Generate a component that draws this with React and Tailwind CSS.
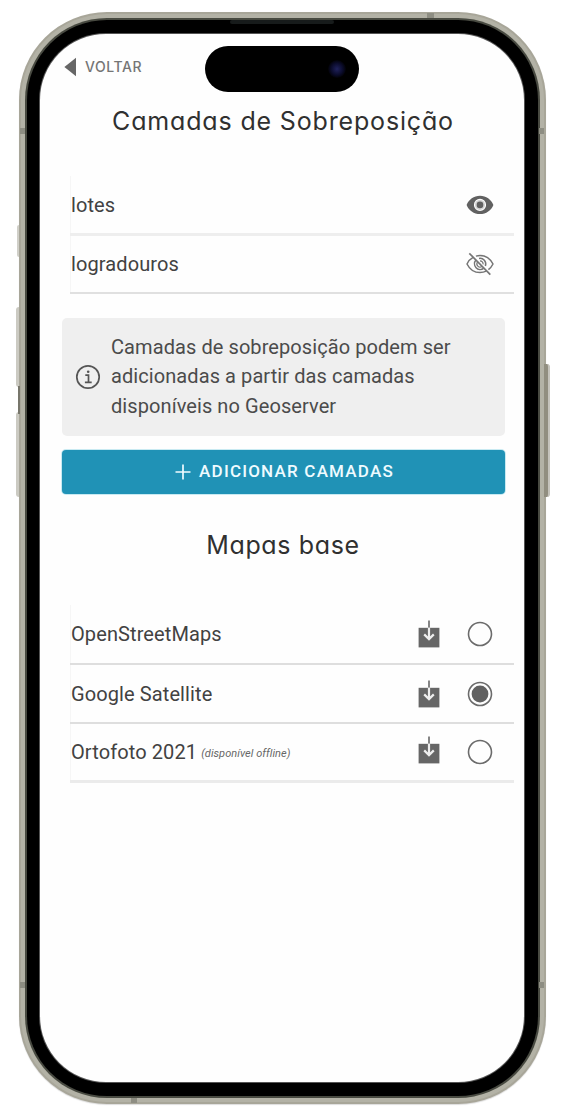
import React from 'react';

function EyeIcon() {
  return (
    <svg viewBox="0 0 28 20" className="h-5 w-7 shrink-0" fill="#616161">
      <path fillRule="evenodd" d="M14 .7C7.9.7 2.7 4.5.6 9.9c2.1 5.4 7.3 9.2 13.4 9.2s11.3-3.8 13.4-9.2C25.3 4.5 20.1.7 14 .7zm0 15.3a6.100 6.100 0 1 1 0-12.200 6.100 6.100 0 0 1 0 12.200z" />
      <circle cx="14" cy="9.9" r="5" fill="#d2d2d2" />
      <circle cx="14" cy="9.9" r="3.300" />
    </svg>
  );
}

function EyeOffIcon() {
  return (
    <svg viewBox="0 0 28 24" className="h-6 w-7 shrink-0" fill="none" stroke="#757575" strokeWidth="1.5">
      <path d="M7.4 5.2C4.7 6.7 2.5 8.800 1 12c2.800 5.600 7.500 8.600 13 8.600 2.300 0 4.400-.5 6.200-1.400M9.900 4.100C11.200 3.700 12.600 3.400 14 3.400c5.700 0 10.300 3.200 13 8.600-1.200 2.400-2.700 4.300-4.600 5.700" />
      <path d="M9.900 8.100a5.700 5.700 0 0 0 7.700 8.300M13 6.400a5.700 5.700 0 0 1 6.400 7.500" />
      <path d="M11.500 10a3.200 3.200 0 0 0 4.400 4.500M14 8.900a3.200 3.200 0 0 1 3.100 3.500" strokeWidth="1.2" />
      <path d="M3.300 1.300 24.300 22.700" strokeWidth="1.7" />
    </svg>
  );
}

function DownloadIcon() {
  return (
    <svg viewBox="0 0 22 28" className="h-7 w-[22px] shrink-0" fill="none">
      <path d="M.6 7.800h20.800v19.600H.6z" fill="#666" />
      <path d="M11 .5v7.300" stroke="#858585" strokeWidth="2" />
      <path d="M11 7.800v10.500M6.200 14.400 11 19.100l4.800-4.700" stroke="#eeeeee" strokeWidth="2.200" />
    </svg>
  );
}

function Radio({ checked }) {
  return (
    <svg viewBox="0 0 26 26" className="size-[26px] shrink-0" fill="none">
      <circle cx="13" cy="13" r="11.500" stroke="#6b6b6b" strokeWidth="1.6" />
      {checked && <circle cx="13" cy="13" r="8.400" fill="#616161" />}
    </svg>
  );
}

function InfoIcon() {
  return (
    <svg viewBox="0 0 26 26" className="size-[26px] shrink-0" fill="none" stroke="#555" strokeWidth="1.700">
      <circle cx="13" cy="13" r="11.200" />
      <path d="M10.300 11.200h3.200v7.100M9.900 18.400h6.800" />
      <circle cx="13.200" cy="7.700" r="1.300" fill="#555" stroke="none" />
    </svg>
  );
}

function Row({ label, note, line, children }) {
  return (
    <div className={`flex justify-between ${line}`}>
      <div className="flex items-center border-l border-l-[#f6f6f6] text-[20px] tracking-[0.1px] whitespace-nowrap text-[#424242]">
        <span>{label}</span>
        {note && <span className="mt-[5px] ml-1 text-[11px] tracking-[0.05px] text-[#666] italic">{note}</span>}
      </div>
      <div className="flex items-center">{children}</div>
    </div>
  );
}

function Heading({ children, className }) {
  return (
    <h2 className={`text-center font-['Inter'] text-[25px] leading-[36px] font-normal whitespace-nowrap text-[#303030] [font-feature-settings:'cv11'] ${className}`}>
      {children}
    </h2>
  );
}

function Screen() {
  return (
    <main className="h-[1048px] w-[484px] overflow-hidden rounded-[66px] bg-[#fefefe] shadow-[0_0_0_1px_#555]">
      <header className="flex h-[68px] items-start justify-between pl-6">
        <div className="mt-[21px] flex items-center gap-[9px] text-[#757575]">
          <svg viewBox="0 0 12 20" className="h-5 w-3" fill="#666"><path d="M12 .8v18.400L.4 10z" /></svg>
          <span className="font-['Inter'] text-[14px] leading-6 font-medium tracking-[0.6px]">VOLTAR</span>
        </div>
        <div className="mt-3 mr-[165px] flex h-[46px] w-[154px] items-center justify-end rounded-full bg-black pr-[13px]">
          <span className="size-[18px] rounded-full bg-[radial-gradient(circle,#20225c_0%,#0b0c2c_45%,#000_75%)]" />
        </div>
      </header>
      <Heading className="mt-px pl-[2px] tracking-[0.84px]">Camadas de Sobreposição</Heading>
      <div className="mt-[37px] ml-[30px] w-[444px]">
        <Row label="lotes" line="h-[60px] border-b-3 border-b-[#eeeeee] pr-5"><EyeIcon /></Row>
        <Row label="logradouros" line="h-[58px] border-b-2 border-b-[#e0e0e0] pr-5"><EyeOffIcon /></Row>
      </div>
      <section className="mt-[24px] ml-[22px] flex h-[118px] w-[443px] items-center gap-[10px] rounded-[5px] bg-[#efefef] pl-[13px]">
        <InfoIcon />
        <p className="text-[20px] leading-[29.600px] tracking-[0.080px] whitespace-nowrap text-[#4b4b4b]">
          Camadas de sobreposição podem ser<br />adicionadas a partir das camadas<br />disponíveis no Geoserver
        </p>
      </section>
      <button className="mt-[14px] ml-[22px] flex h-[44px] w-[443px] items-center justify-center gap-2 rounded-[4px] bg-[#2092b6] pl-[2px] text-[17px] font-medium tracking-[1.2px] whitespace-nowrap text-[#effbff] shadow-[0_0_0_1px_#c8eaf2]">
        <svg viewBox="0 0 16 16" className="size-4" stroke="currentColor" strokeWidth="1.700"><path d="M8 .5v15M.5 8h15" /></svg>
        <span>ADICIONAR CAMADAS</span>
      </button>
      <Heading className="mt-[33px] pl-[2px] tracking-[0.65px]">Mapas base</Heading>
      <div className="mt-[42px] ml-[30px] w-[444px]">
        <Row label="OpenStreetMaps" line="h-[60px] border-b-2 border-b-[#dedede] pr-[21px]">
          <DownloadIcon /><span className="w-[27px]" /><Radio />
        </Row>
        <Row label="Google Satellite" line="h-[59px] border-b-2 border-b-[#dedede] pr-[21px]">
          <DownloadIcon /><span className="w-[27px]" /><Radio checked />
        </Row>
        <Row label="Ortofoto 2021" note="(disponível offline)" line="h-[59px] border-b-3 border-b-[#ebebeb] pr-[21px]">
          <span className="mb-[5px]"><DownloadIcon /></span><span className="w-[27px]" /><Radio />
        </Row>
      </div>
    </main>
  );
}

export default function App() {
  return (
    <div className="relative h-[1116px] w-[562px] overflow-hidden bg-white pt-3 pl-[19px] font-['Roboto',sans-serif]">
      <i className="absolute top-[225px] left-[17px] h-[32px] w-[2px] rounded-l bg-[#d0cfc8]" />
      <i className="absolute top-[307px] left-[16px] h-[80px] w-[3px] rounded-l bg-[#cbcac2]" />
      <i className="absolute top-[412px] left-[16px] h-[85px] w-[3px] rounded-l bg-[#cbcac2]" />
      <i className="absolute top-[364px] left-[544px] h-[133px] w-[6px] rounded-r-[3px] border-r-2 border-[#c5c3bc] bg-[#918e80]" />
      <div className="h-[1092px] w-[527px] rounded-[88px] bg-[#a8a699] p-[2px] shadow-[0_1px_1px_#ddd]">
        <div className="h-[1088px] w-[523px] rounded-[86px] bg-[#b3b2a6] p-[4px]">
          <div className="h-[1080px] w-[515px] rounded-[82px] bg-[#484a41] p-[2px]">
            <div className="h-[1076px] w-[511px] rounded-[80px] bg-black pt-[14px] pl-[13px]">
              <Screen />
            </div>
          </div>
        </div>
      </div>
      <i className="absolute top-[386px] left-[18px] h-[28px] w-[2px] bg-[#77766b]" />
      <i className="absolute top-[20px] left-[230px] h-[4px] w-[104px] rounded bg-[#171b1b]" />
      <i className="absolute top-[128px] left-[20px] h-[6px] w-[5px] bg-[#8d8d82]" />
      <i className="absolute top-[128px] left-[539px] h-[6px] w-[5px] bg-[#8d8d82]" />
      <i className="absolute top-[982px] left-[20px] h-[6px] w-[5px] bg-[#8d8d82]" />
      <i className="absolute top-[982px] left-[539px] h-[6px] w-[5px] bg-[#8d8d82]" />
      <i className="absolute top-[13px] left-[427px] h-[5px] w-[7px] bg-[#8e8e83]" />
      <i className="absolute top-[1098px] left-[131px] h-[5px] w-[6px] bg-[#8e8e83]" />
    </div>
  );
}
